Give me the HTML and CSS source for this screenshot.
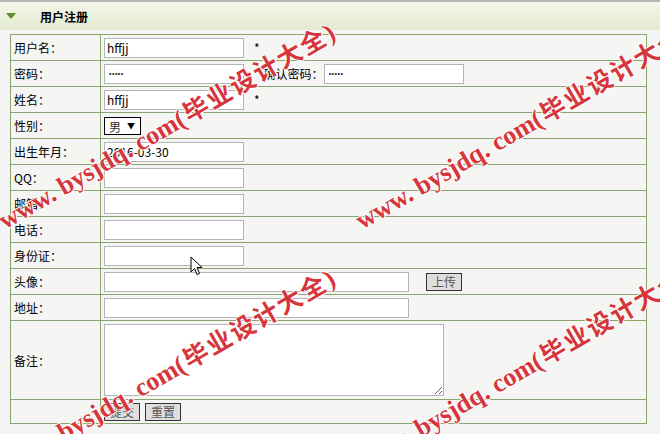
FILE: index.html
```html
<!DOCTYPE html>
<html lang="zh-CN">
<head>
  <meta charset="UTF-8">
  <title>用户注册</title>
  <link rel="stylesheet" href="styles.css">
</head>
<body>
  <!-- Title bar -->
  <div class="header">
    <span class="arrow"></span>
    <span class="title">用户注册</span>
  </div>

  <table class="form">
    <tr>
      <td class="label">用户名：</td>
      <td><input class="text" type="text" value="hffjj"><span class="star">*</span></td>
    </tr>
    <tr>
      <td class="label">密码：</td>
      <td>
        <input class="text pwd" type="password" value="12345"><span class="star">*</span><span class="sub">确认密码：</span><input class="text pwd" type="password" value="12345">
      </td>
    </tr>
    <tr>
      <td class="label">姓名：</td>
      <td><input class="text" type="text" value="hffjj"><span class="star">*</span></td>
    </tr>
    <tr>
      <td class="label">性别：</td>
      <td>
        <span class="select"><select><option>男</option><option>女</option></select></span>
      </td>
    </tr>
    <tr>
      <td class="label">出生年月：</td>
      <td><input class="text" type="text" value="2016-03-30"></td>
    </tr>
    <tr>
      <td class="label">QQ：</td>
      <td><input class="text" type="text"></td>
    </tr>
    <tr>
      <td class="label">邮箱：</td>
      <td><input class="text" type="text"></td>
    </tr>
    <tr>
      <td class="label">电话：</td>
      <td><input class="text" type="text"></td>
    </tr>
    <tr>
      <td class="label">身份证：</td>
      <td><input class="text" type="text"></td>
    </tr>
    <tr>
      <td class="label">头像：</td>
      <td><input class="text wide" type="text"><button class="btn upload">上传</button></td>
    </tr>
    <tr>
      <td class="label">地址：</td>
      <td><input class="text wide" type="text"></td>
    </tr>
    <tr class="memo">
      <td class="label">备注：</td>
      <td><textarea></textarea></td>
    </tr>
    <tr class="actions">
      <td></td>
      <td><button class="btn">提交</button><button class="btn">重置</button></td>
    </tr>
  </table>

  <!-- Watermark overlay -->
  <div class="watermarks">
    <div class="mark m1">www. bysjdq. com(<span class="cn">毕业设计大全</span>)</div>
    <div class="mark m2">www. bysjdq. com(<span class="cn">毕业设计大全</span>)</div>
    <div class="mark m3">www. bysjdq. com(<span class="cn">毕业设计大全</span>)</div>
    <div class="mark m4">www. bysjdq. com(<span class="cn">毕业设计大全</span>)</div>
  </div>

  <!-- mouse pointer -->
  <svg class="cursor" width="13" height="20" viewBox="0 0 13 20">
    <path d="M1 1 L1 16 L4.5 12.5 L7 18.5 L9.5 17.5 L7 11.5 L12 11.5 Z" fill="#fff" stroke="#000" stroke-width="1"/>
  </svg>
</body>
</html>
```

FILE: styles.css
```css
body {
  margin: 0;
  padding: 0;
  height: 434px;
  overflow: hidden;
  position: relative;
  background-color: #f4f4f4;
  font-family: "Noto Sans CJK SC", sans-serif;
  font-size: 12px;
  color: #000;
}

/* Title bar */
.header {
  height: 28px;
  border-top: 2px solid #b4b4b4;
  background: linear-gradient(#f4f6ea, #e3eacf);
  display: flex;
  align-items: center;
}

.arrow {
  width: 0;
  height: 0;
  margin-left: 6px;
  border-left: 5px solid transparent;
  border-right: 5px solid transparent;
  border-top: 6px solid #5f8f2a;
}

.title {
  margin-left: 24px;
  font-weight: bold;
}

/* Form table */
.form {
  margin: 4px 0 0 10px;
  width: 637px;
  border-collapse: collapse;
  background-color: #f5f5f4;
}

.form td {
  border: 1px solid #87a56c;
  height: 25px;
  padding: 0 3px;
  white-space: nowrap;
}

.form td.label {
  width: 83px;
}

.text {
  width: 140px;
  height: 20px;
  box-sizing: border-box;
  border: 1px solid #b4b4b4;
  padding: 0 2px;
  background: #fff;
  font-family: "Noto Sans CJK SC", sans-serif;
  font-size: 12px;
  vertical-align: middle;
  margin: 0;
}

.text.pwd {
  font-family: "Liberation Sans", sans-serif;
  font-size: 7px;
  letter-spacing: 0.5px;
  padding-left: 4px;
  color: #222;
}

.text.wide {
  width: 305px;
}

.star {
  margin-left: 10px;
  vertical-align: middle;
}

.sub {
  margin-left: 4px;
  vertical-align: middle;
}

.select {
  position: relative;
  display: inline-block;
  vertical-align: middle;
}

.select select {
  appearance: none;
  width: 37px;
  height: 18px;
  border: 1px solid #000;
  border-radius: 0;
  background: #fff;
  padding: 0 0 0 4px;
  font-family: "Noto Sans CJK SC", sans-serif;
  font-size: 12px;
  color: #333;
}

.select::after {
  content: "\25BC";
  position: absolute;
  right: 6px;
  top: 3px;
  font-size: 8px;
  pointer-events: none;
}

.memo td {
  height: 78px;
}

textarea {
  width: 340px;
  height: 72px;
  box-sizing: border-box;
  border: 1px solid #b4b4b4;
  margin: 0;
  vertical-align: middle;
}

.btn {
  height: 18px;
  padding: 0 5px;
  margin: 0;
  border: 1px solid #333;
  background-color: #dedede;
  color: #555;
  font-family: "Noto Sans CJK SC", sans-serif;
  font-size: 12px;
  line-height: 16px;
  vertical-align: middle;
}

.btn + .btn {
  margin-left: 5px;
}

.btn.upload {
  margin-left: 17px;
}

.actions td {
  height: 23px;
}

/* Watermarks */
.watermarks {
  position: absolute;
  left: 0;
  top: 0;
  right: 0;
  bottom: 0;
  overflow: hidden;
  pointer-events: none;
}

.mark {
  position: absolute;
  white-space: nowrap;
  font-family: "Liberation Serif", serif;
  font-weight: bold;
  font-size: 26px;
  line-height: 28px;
  color: #d6363b;
  transform: rotate(-30deg);
  transform-origin: 0 100%;
  text-shadow: 1px 0 #fff, -1px 0 #fff, 0 1px #fff, 0 -1px #fff;
}

.mark .cn {
  font-family: "Noto Sans CJK SC", sans-serif;
  font-weight: bold;
  font-size: 25px;
  letter-spacing: 2px;
  margin-left: 2px;
}

.m1 { left: 8px; top: 204px; }
.m2 { left: 365px; top: 204px; }
.m3 { left: 8px; top: 450px; }
.m4 { left: 365px; top: 446px; }

.cursor {
  position: absolute;
  left: 190px;
  top: 256px;
}
```
